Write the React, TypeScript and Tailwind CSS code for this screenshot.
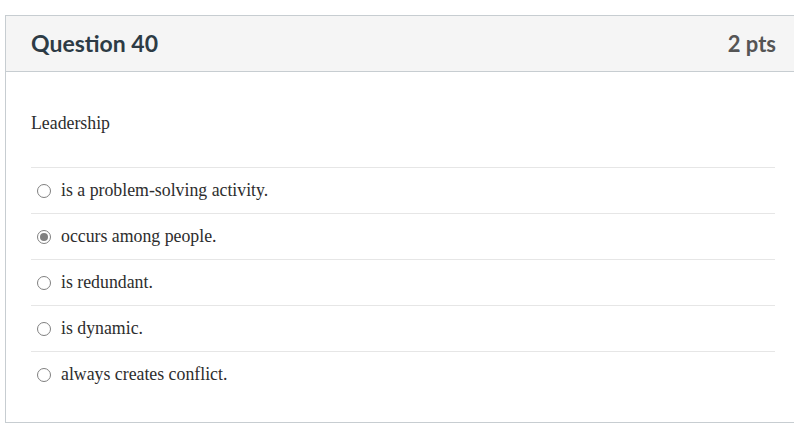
import React from "react";

const options = [
  { text: "is a problem-solving activity.", selected: false },
  { text: "occurs among people.", selected: true },
  { text: "is redundant.", selected: false },
  { text: "is dynamic.", selected: false },
  { text: "always creates conflict.", selected: false },
];

function Radio({ selected }: { selected: boolean }) {
  return (
    <span className="flex h-[14px] w-[14px] shrink-0 items-center justify-center rounded-full border border-[#808080] bg-white">
      {selected && <span className="h-[8px] w-[8px] rounded-full bg-[#808080]" />}
    </span>
  );
}

export default function App() {
  return (
    <div className="h-[431px] w-[794px] overflow-hidden bg-white pt-[15px] pl-[5px]">
      <div className="w-[795px] border border-[#c7cdd1] border-r-0">
        <div className="flex h-[56px] items-center justify-between border-b border-[#c7cdd1] bg-[#f5f5f5] pl-[25px] pr-[24px]">
          <span className="text-[23px] font-bold text-[#2d3b45] [font-family:Lato,sans-serif]">Question 40</span>
          <span className="text-[22px] font-bold text-[#555555] [font-family:Lato,sans-serif]">2 pts</span>
        </div>
        <div className="px-[25px] pb-[25px] [font-family:'Liberation_Serif',serif] text-[17.8px] text-[#2d2d2d]">
          <div className="flex h-[95px] items-center pt-[7px]">Leadership</div>
          {options.map((o) => (
            <div key={o.text} className="flex h-[46px] items-center gap-[10px] border-t border-[#e6e6e6] pl-[6px]">
              <Radio selected={o.selected} />
              <span>{o.text}</span>
            </div>
          ))}
        </div>
      </div>
    </div>
  );
}
